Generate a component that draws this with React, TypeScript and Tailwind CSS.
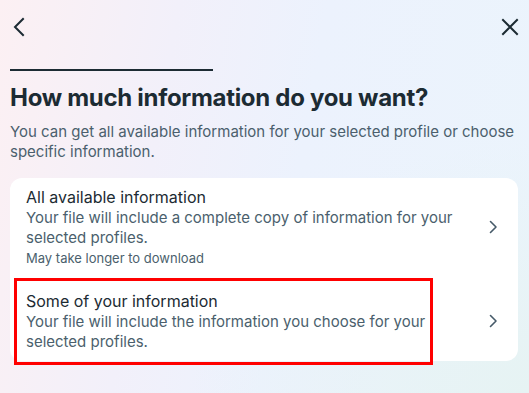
type Option = {
  title: string
  description: string
  note?: string
  highlighted?: boolean
}

const options: Option[] = [
  {
    title: "All available information",
    description: "Your file will include a complete copy of information for your selected profiles.",
    note: "May take longer to download",
  },
  {
    title: "Some of your information",
    description: "Your file will include the information you choose for your selected profiles.",
    highlighted: true,
  },
]

function Chevron({ className }: { className?: string }) {
  return (
    <svg viewBox="0 0 22 22" className={className} fill="none" stroke="currentColor" strokeWidth={1.6} strokeLinecap="round" strokeLinejoin="round">
      <path d="M8.5 5.5 14 11l-5.5 5.5" />
    </svg>
  )
}

function OptionRow({ option, first }: { option: Option; first: boolean }) {
  return (
    <button
      className={`relative w-full flex flex-row items-center text-left pl-4 pr-[14px] ${first ? "pt-[8px] pb-[10px]" : "pt-[12px] pb-[9px]"}`}
    >
      <div className="flex-1 flex flex-col pr-[20px]">
        <span className="text-[16px] leading-[22px] text-[#1c2b33]">{option.title}</span>
        <span className="text-[15px] leading-[20px] text-[#4b5f6d]">{option.description}</span>
        {option.note && <span className="text-[13px] leading-[19px] mt-[1px] text-[#4b5f6d]">{option.note}</span>}
      </div>
      <Chevron className="w-[22px] h-[22px] text-[#465a69] shrink-0" />
      {option.highlighted && (
        <div className="absolute left-[4px] top-0 w-[419px] h-[87px] border-[3px] border-[#ff0000] pointer-events-none" />
      )}
    </button>
  )
}

export default function App() {
  return (
    <div
      className="w-[529px] h-[393px] overflow-hidden bg-[radial-gradient(ellipse_at_100%_100%,#e6f3f3_0%,rgba(230,243,243,0)_45%),linear-gradient(100deg,#fcf0f3_0%,#f2f0fa_30%,#ecf2fd_55%,#ebf4fc_100%)] text-[#1c2b33]"
      style={{ fontFamily: "Inter, 'Noto Sans', sans-serif" }}
    >
      <div className="flex flex-row justify-between items-center pl-[11px] pr-[9px] pt-[17px]">
        <svg viewBox="0 0 20 20" className="w-[20px] h-[20px]" fill="none" stroke="#1c2b33" strokeWidth={2} strokeLinecap="square" strokeLinejoin="miter">
          <path d="M12 2 4 10l8 8" />
        </svg>
        <svg viewBox="0 0 20 20" className="w-[20px] h-[20px]" fill="none" stroke="#1c2b33" strokeWidth={2} strokeLinecap="square">
          <path d="M3 3l14 14M17 3 3 17" />
        </svg>
      </div>
      <div className="px-[10px]">
        <div className="w-[203px] h-[2px] bg-[#1c2b33] mt-[32px]" />
        <h1 className="mt-[13px] text-[24px] leading-[28px] font-bold tracking-[-0.3px]">How much information do you want?</h1>
        <p className="mt-[10px] text-[15px] leading-[20px] text-[#4b5f6d]">
          You can get all available information for your selected profile or choose specific information.
        </p>
        <div className="mt-[16px] bg-white rounded-[12px] flex flex-col w-[508px]">
          {options.map((o, i) => (
            <OptionRow key={o.title} option={o} first={i === 0} />
          ))}
        </div>
      </div>
    </div>
  )
}
